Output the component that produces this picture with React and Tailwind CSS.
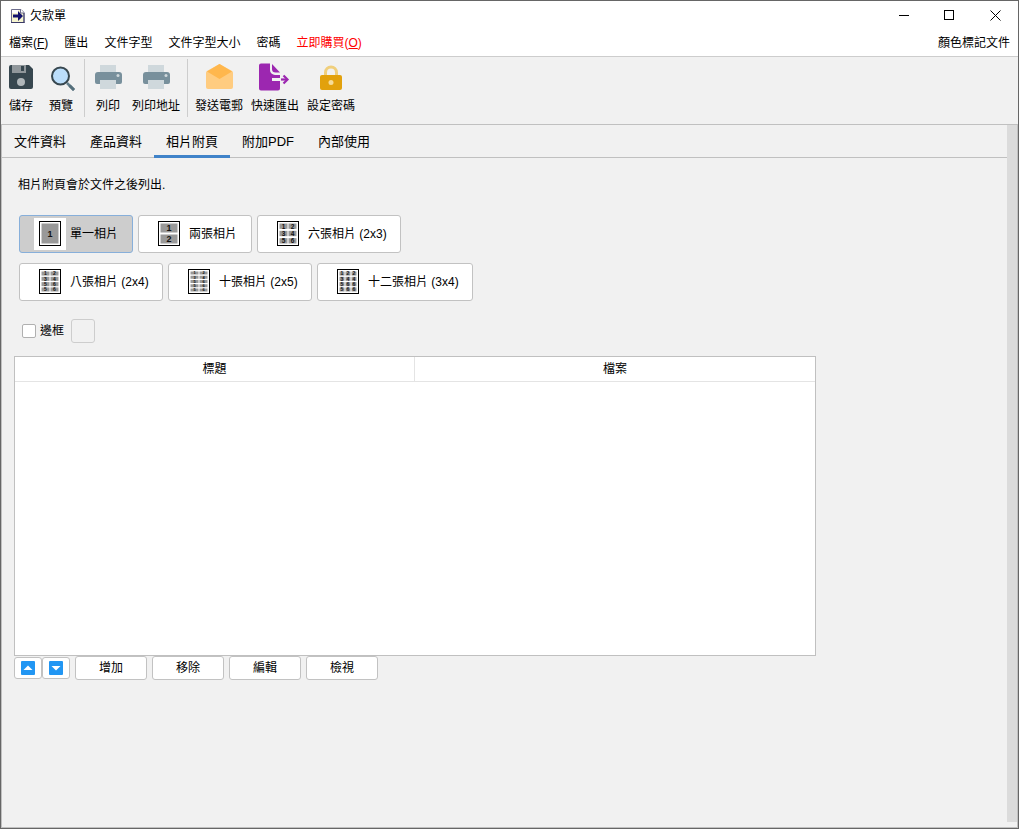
import React from "react";

const uiFont =
  "font-['Liberation_Sans','Noto_Sans_CJK_TC',sans-serif]";

function AppIcon() {
  return (
    <svg width="14" height="16" viewBox="0 0 14 16" aria-hidden="true">
      <path d="M.5 1.500h9.500l3 3v10H.5z" fill="#f6f5cf" stroke="#6c6c8c" />
      <path d="M1 2h6v3H1z" fill="#fff" />
      <path d="M9.500 1v4H13" fill="#fff" stroke="#6c6c8c" />
      <path d="M0 14.500h13.500M13 5v10" stroke="#3a3a66" />
      <path d="M2 6.500h5V3l5 5-5 5V9.500H2z" fill="#12126e" />
    </svg>
  );
}

function SaveIcon() {
  return (
    <svg width="32" height="32" viewBox="0 0 32 32" aria-hidden="true">
      <path d="M6 4h18l4 4v18a2 2 0 0 1-2 2H6a2 2 0 0 1-2-2V6a2 2 0 0 1 2-2z" fill="#37474f" />
      <path d="M7 4h14v8H7z" fill="#90979b" />
      <path d="M16 5h3v5h-3z" fill="#37474f" />
      <circle cx="16" cy="21" r="4" fill="#b0b7ba" />
    </svg>
  );
}

function PreviewIcon() {
  return (
    <svg width="32" height="32" viewBox="0 0 32 32" aria-hidden="true">
      <path d="M22 22l7 7" stroke="#607d8b" strokeWidth="2.500" />
      <path d="M24.500 24.500l4.500 4.500" stroke="#546e7a" strokeWidth="3" />
      <circle cx="15.500" cy="15" r="8.500" fill="#bbdefb" stroke="#37474f" strokeWidth="2" />
    </svg>
  );
}

function PrintIcon() {
  return (
    <svg width="32" height="32" viewBox="0 0 32 32" aria-hidden="true">
      <path d="M6 11h21a3 3 0 0 1 3 3v7a2 2 0 0 1-2 2H5a2 2 0 0 1-2-2v-7a3 3 0 0 1 3-3z" fill="#78909c" />
      <path d="M8 4h16v7H8zM8 19h16v9H8z" fill="#cfd8dc" />
      <circle cx="26" cy="14.500" r="1.500" fill="#cfd8dc" />
    </svg>
  );
}

function MailIcon() {
  return (
    <svg width="32" height="32" viewBox="0 0 32 32" aria-hidden="true">
      <path d="M16.500 3L29 10q1 .6 1 2v14a2 2 0 0 1-2 2H5a2 2 0 0 1-2-2V12q0-1.400 1-2z" fill="#ffcc80" />
      <path d="M16.500 3L29 10.500 16.500 18 4 10.500z" fill="#ffb74d" />
    </svg>
  );
}

function ExportIcon() {
  return (
    <svg width="32" height="32" viewBox="0 0 32 32" aria-hidden="true">
      <path
        d="M2 2.500h9V9a5 5 0 0 0 5 5h5v3h-8v3h8v7.500a2 2 0 0 1-2 2H2a2 2 0 0 1-2-2v-23a2 2 0 0 1 2-2z"
        fill="#9c27b0"
      />
      <path d="M13 3l8 8.500h-4.500A3.500 3.500 0 0 1 13 8z" fill="#9c27b0" />
      <path d="M22 18.500h6" stroke="#9c27b0" strokeWidth="2.200" />
      <path d="M24.500 14.500l4 4-4 4" fill="none" stroke="#9c27b0" strokeWidth="2.200" />
    </svg>
  );
}

function LockIcon() {
  return (
    <svg width="32" height="32" viewBox="0 0 32 32" aria-hidden="true">
      <path d="M10.500 15v-3.500a5.500 5.500 0 0 1 11 0V15" fill="none" stroke="#f0cf7c" strokeWidth="3" />
      <rect x="5" y="14" width="22" height="15" rx="2" fill="#e2a10c" />
      <circle cx="16" cy="21.500" r="2.500" fill="#f6dc98" />
    </svg>
  );
}

const digitSizes = { 1: 9, 2: 9, 3: 6.5, 4: 5, 5: 4 };

function LayoutIcon({ labels, columns }) {
  const rows = labels.length / columns;
  const gap = rows > 3 ? 1.25 : 2;
  const cw = (17 - (columns - 1)) / columns;
  const ch = (20 - gap * (rows - 1)) / rows;
  const size = digitSizes[rows];
  return (
    <svg width="32" height="32" viewBox="0 0 32 32" className="shrink-0 bg-white" aria-hidden="true">
      <rect x="5.500" y="3.500" width="21" height="24" fill="#fff" stroke="#000" />
      {labels.map((label, i) => {
        const x = 7.5 + (i % columns) * (cw + 1);
        const y = 5.5 + Math.floor(i / columns) * (ch + gap);
        return (
          <g key={i}>
            <rect x={x} y={y} width={cw} height={ch} fill="#999" />
            <text
              x={x + cw / 2}
              y={y + ch / 2 + size * 0.36}
              textAnchor="middle"
              fontSize={size}
              fontWeight="700"
              fill="#111"
            >
              {label}
            </text>
          </g>
        );
      })}
    </svg>
  );
}

const menus = [
  { text: "檔案", key: "F" },
  { text: "匯出" },
  { text: "文件字型" },
  { text: "文件字型大小" },
  { text: "密碼" },
  { text: "立即購買", key: "O", accent: true },
];

const toolGroups = [
  [
    { text: "儲存", Icon: SaveIcon },
    { text: "預覽", Icon: PreviewIcon, wide: true },
  ],
  [
    { text: "列印", Icon: PrintIcon },
    { text: "列印地址", Icon: PrintIcon },
  ],
  [
    { text: "發送電郵", Icon: MailIcon },
    { text: "快速匯出", Icon: ExportIcon },
    { text: "設定密碼", Icon: LockIcon },
  ],
];

const tabs = ["文件資料", "產品資料", "相片附頁", "附加PDF", "內部使用"];

const layoutRows = [
  [
    { text: "單一相片", labels: ["1"], columns: 1, selected: true, width: "w-[114px]" },
    { text: "兩張相片", labels: ["1", "2"], columns: 1, width: "w-[114px]" },
    { text: "六張相片 (2x3)", labels: ["1", "2", "3", "4", "5", "6"], columns: 2, width: "w-36" },
  ],
  [
    {
      text: "八張相片 (2x4)",
      labels: ["1", "2", "3", "4", "5", "6", "5", "6"],
      columns: 2,
      width: "w-36",
    },
    {
      text: "十張相片 (2x5)",
      labels: ["1", "2", "3", "4", "5", "6", "5", "6", "5", "6"],
      columns: 2,
      width: "w-36",
    },
    {
      text: "十二張相片 (3x4)",
      labels: ["1", "2", "2", "3", "4", "4", "5", "6", "6", "5", "6", "6"],
      columns: 3,
      width: "w-[156px]",
    },
  ],
];

function MenuButton({ text, accent, shortcut }) {
  return (
    <button className={accent ? "px-2 text-[#f00]" : "px-2"}>
      {text}
      {shortcut && (
        <>
          (<span className="underline">{shortcut}</span>)
        </>
      )}
    </button>
  );
}

function MoveButton({ label, path }) {
  return (
    <button
      aria-label={label}
      className="flex h-[22px] w-7 items-center justify-center rounded-[3px] border border-[#c2c2c2] bg-white"
    >
      <svg width="14" height="14" viewBox="0 0 14 14" aria-hidden="true">
        <rect width="14" height="14" rx="1" fill="#2196f3" />
        <path d={path} fill="#fff" />
      </svg>
    </button>
  );
}

export default function App() {
  return (
    <div
      className={`flex min-h-screen flex-col border border-[#666] bg-[#f1f1f1] text-[12px] leading-4 text-black ${uiFont}`}
    >
      <header className="bg-white">
        <div className="flex h-[29px] items-center justify-between">
          <div className="flex items-center gap-[5px] pl-2.5">
            <AppIcon />
            <h1>欠款單</h1>
          </div>
          <div className="flex h-full">
            <button aria-label="最小化" className="flex w-[46px] items-center justify-center">
              <svg width="11" height="11" viewBox="0 0 11 11"><path d="M1 5.500h10" stroke="#000" /></svg>
            </button>
            <button aria-label="最大化" className="flex w-[46px] items-center justify-center">
              <svg width="11" height="11" viewBox="0 0 11 11">
                <rect x=".5" y=".5" width="9" height="9" fill="none" stroke="#000" />
              </svg>
            </button>
            <button aria-label="關閉" className="flex w-[46px] items-center justify-center">
              <svg width="11" height="11" viewBox="0 0 11 11">
                <path d="M.5 .5l10 10M10.500 .5l-10 10" stroke="#000" />
              </svg>
            </button>
          </div>
        </div>
        <nav className="flex h-[27px] items-center justify-between border-b border-[#cdcdcd]">
          <div className="flex">
            {menus.map((m) => (
              <MenuButton key={m.text} text={m.text} accent={m.accent} shortcut={m.key} />
            ))}
          </div>
          <MenuButton text="顏色標記文件" />
        </nav>
      </header>

      <div role="toolbar" className="flex h-[67px]">
        {toolGroups.map((group, g) => (
          <React.Fragment key={g}>
            {g > 0 && <div className="mx-[3px] mt-[2px] h-[58px] w-px bg-[#cdcdcd]" />}
            {group.map(({ text, Icon }) => (
              <button key={text} className="flex min-w-10 flex-col items-center gap-[5px] px-1 pt-1">
                <Icon />
                {text}
              </button>
            ))}
          </React.Fragment>
        ))}
      </div>

      <main className="flex grow border border-[#c0c0c0]">
        <div className="min-w-0 grow">
          <div role="tablist" className="flex h-[33px] border-b border-[#c0c0c0] text-[13px]">
            {tabs.map((tab, i) => (
              <button
                key={tab}
                role="tab"
                aria-selected={i === 2}
                className={
                  i === 2
                    ? "-mb-px border-b-3 border-[#4083c9] px-3 pt-[3px]"
                    : "-mb-px border-b-3 border-transparent px-3 pt-[3px]"
                }
              >
                {tab}
              </button>
            ))}
          </div>

          <div className="px-3 pt-[19px]">
            <p className="px-1">相片附頁會於文件之後列出.</p>

            <div className="mt-[22px] flex flex-col gap-2.5 px-[5px]">
              {layoutRows.map((row, r) => (
                <div key={r} className="flex flex-wrap gap-[5px]">
                  {row.map((o) => (
                    <button
                      key={o.text}
                      aria-pressed={!!o.selected}
                      className={`flex h-[38px] items-center gap-1 rounded-[3px] border pl-3.5 whitespace-nowrap ${o.width} ${
                        o.selected ? "border-[#87afda] bg-[#cdcdcd]" : "border-[#c2c2c2] bg-white"
                      }`}
                    >
                      <LayoutIcon labels={o.labels} columns={o.columns} />
                      {o.text}
                    </button>
                  ))}
                </div>
              ))}
            </div>

            <div className="mt-[18px] flex items-center gap-[7px] px-2">
              <label className="flex items-center gap-1">
                <input
                  type="checkbox"
                  className="size-3.5 appearance-none rounded-[2px] border border-[#b0b0b0] bg-white checked:bg-[#4083c9]"
                />
                邊框
              </label>
              <button
                aria-label="邊框顏色"
                className="size-6 rounded-[3px] border border-[#cdcdcd]"
              />
            </div>

            <div className="mt-[13px] h-[300px] w-[802px] max-w-full border border-[#c0c0c0] bg-white">
              <table className="w-full table-fixed border-separate border-spacing-0">
                <thead>
                  <tr className="h-[25px]">
                    <th className="border-r border-b border-[#e4e4e4] p-0 font-normal">標題</th>
                    <th className="border-b border-[#e4e4e4] p-0 font-normal">檔案</th>
                  </tr>
                </thead>
                <tbody />
              </table>
            </div>

            <div className="flex items-center gap-[5px]">
              <div className="flex">
                <MoveButton label="上移" path="M2.500 9L7 4.500 11.500 9z" />
                <MoveButton label="下移" path="M2.500 5L7 9.500 11.500 5z" />
              </div>
              {["增加", "移除", "編輯", "檢視"].map((t) => (
                <button key={t} className="h-6 w-[72px] rounded-[3px] border border-[#c2c2c2] bg-white">
                  {t}
                </button>
              ))}
            </div>
          </div>
        </div>
        <div className="mb-[5px] w-2.5 shrink-0 bg-[#dbdbdb]" />
      </main>
    </div>
  );
}
